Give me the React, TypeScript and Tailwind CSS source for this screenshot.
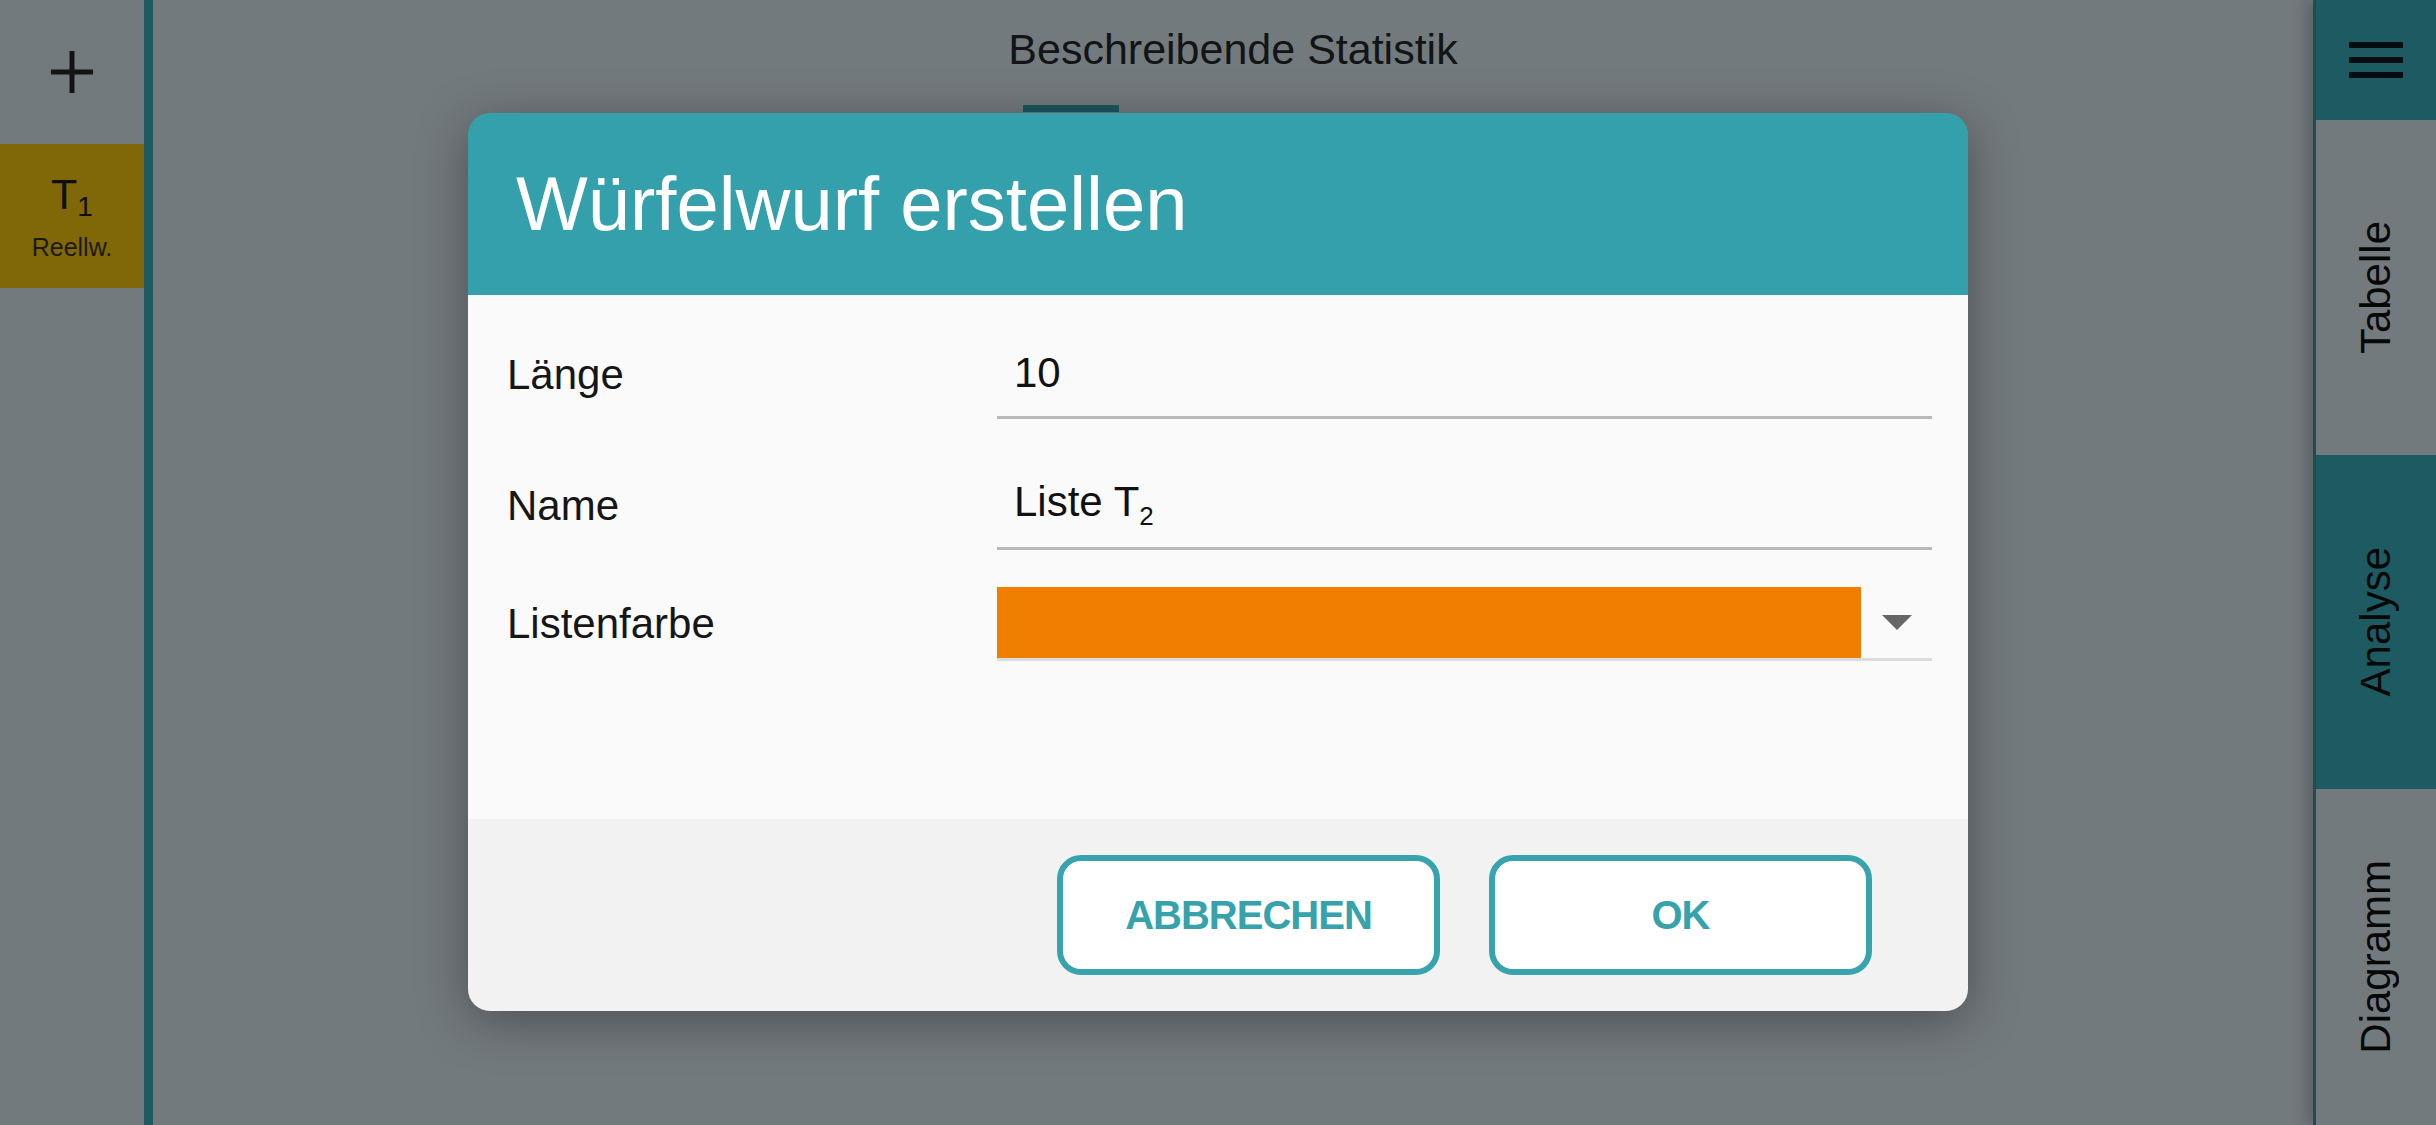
import React from 'react';

const font = "font-['Liberation_Sans',Arial,sans-serif]";

export default function App() {
    return (
        <div
            className={`relative flex h-[1125px] w-[2436px] overflow-hidden bg-[#737a7d] ${font}`}
        >
            <LeftRail />
            <div className="w-[9px] bg-[#1d5a62]" />
            <MainArea />
            <RightRail />
            <DiceDialog />
        </div>
    );
}

function LeftRail() {
    return (
        <aside className="flex w-[144px] flex-col">
            <div className="flex h-[144px] items-center justify-center">
                <svg width="42" height="42" viewBox="0 0 42 42">
                    <rect x="18.5" y="0" width="5" height="42" fill="#111315" />
                    <rect x="0" y="18.5" width="42" height="5" fill="#111315" />
                </svg>
            </div>

            <div className="flex h-[144px] flex-col items-center bg-[#806808]">
                <div className="mt-[26px] text-[43px] leading-[48px] text-[#0e0e0c]">
                    T
                    <span className="relative top-[7px] text-[28px]">1</span>
                </div>
                <div className="mt-[8px] text-[25px] leading-[30px] text-[#1c1a0e]">
                    Reellw.
                </div>
            </div>
        </aside>
    );
}

function MainArea() {
    return (
        <main className="flex flex-1 flex-col items-center">
            <div className="flex flex-col pt-[25px]">
                <h1 className="text-[43px] leading-[48px] text-[#121416]">
                    Beschreibende Statistik
                </h1>
                <div className="ml-[15px] mt-[32px] h-[7px] w-[96px] bg-[#1a575e]" />
            </div>
        </main>
    );
}

function RightRail() {
    const tabs = [
        { label: 'Tabelle', active: false, height: 'h-[335px]' },
        { label: 'Analyse', active: true, height: 'h-[334px]' },
        { label: 'Diagramm', active: false, height: 'flex-1' },
    ];

    return (
        <nav className="relative flex w-[123px] flex-col border-l-[3px] border-[#1b4d53] shadow-[-8px_0_12px_rgba(0,0,0,0.18)]">
            <div className="flex h-[120px] flex-col items-center justify-center gap-[9px] bg-[#1d5a61]">
                <div className="h-[6px] w-[54px] bg-[#050d10]" />
                <div className="h-[6px] w-[54px] bg-[#050d10]" />
                <div className="h-[6px] w-[54px] bg-[#050d10]" />
            </div>

            {tabs.map(({ label, active, height }) => (
                <div
                    key={label}
                    className={`flex items-center justify-center ${height} ${
                        active ? 'bg-[#1d5a61]' : 'bg-[#737a7d]'
                    }`}
                >
                    <span className="rotate-180 text-[42px] leading-[48px] text-[#060808] [writing-mode:vertical-rl]">
                        {label}
                    </span>
                </div>
            ))}
        </nav>
    );
}

function DiceDialog() {
    return (
        <div className="absolute left-[468px] top-[113px] flex h-[898px] w-[1500px] flex-col overflow-hidden rounded-[22px] shadow-[0_10px_50px_rgba(0,0,0,0.35)]">
            <header className="flex h-[182px] items-center bg-[#34a0ac] pl-[48px]">
                <h2 className="text-[76px] leading-[86px] text-white">
                    Würfelwurf erstellen
                </h2>
            </header>

            <section className="flex h-[524px] flex-col bg-[#fafafa] px-[36px] pt-[35px]">
                <div className="flex h-[89px] items-center">
                    <FieldLabel>Länge</FieldLabel>
                    <div className="flex h-full flex-1 items-center border-b-[3px] border-[#b9b9b9] pl-[17px] text-[42px] leading-[48px] text-[#111]">
                        10
                    </div>
                </div>

                <div className="mt-[42px] flex h-[89px] items-center">
                    <FieldLabel>Name</FieldLabel>
                    <div className="flex h-full flex-1 items-center border-b-[3px] border-[#b9b9b9] pl-[17px] text-[42px] leading-[48px] text-[#111]">
                        <span>
                            Liste T
                            <span className="relative top-[9px] text-[26px]">2</span>
                        </span>
                    </div>
                </div>

                <div className="mt-[37px] flex h-[74px] items-center">
                    <FieldLabel>Listenfarbe</FieldLabel>
                    <div className="flex h-full flex-1 border-b-[3px] border-[#dcdcdc]">
                        <div className="flex-1 bg-[#f07e00]" />
                        <div className="flex w-[71px] items-center justify-center">
                            <svg width="30" height="15" viewBox="0 0 30 15">
                                <polygon points="0,0 30,0 15,15" fill="#666666" />
                            </svg>
                        </div>
                    </div>
                </div>
            </section>

            <footer className="flex flex-1 items-center justify-end gap-[49px] bg-[#f2f2f2] pr-[96px]">
                <DialogButton>ABBRECHEN</DialogButton>
                <DialogButton>OK</DialogButton>
            </footer>
        </div>
    );
}

function FieldLabel({ children }: { children: React.ReactNode }) {
    return (
        <div className="w-[493px] pl-[3px] text-[42px] leading-[48px] text-[#161616]">
            {children}
        </div>
    );
}

function DialogButton({ children }: { children: React.ReactNode }) {
    return (
        <button className="flex h-[120px] w-[383px] items-center justify-center rounded-[24px] border-[6px] border-[#37a3ac] bg-white text-[40px] font-bold tracking-[-1px] text-[#36a2ab]">
            {children}
        </button>
    );
}
